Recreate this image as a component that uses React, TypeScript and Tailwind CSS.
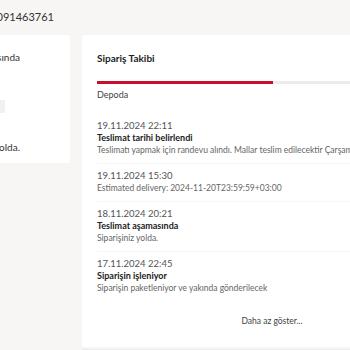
import React from 'react';

type TrackEvent = {
  date: string;
  title?: string;
  text: string;
};

const events: TrackEvent[] = [
  {
    date: '19.11.2024 22:11',
    title: 'Teslimat tarihi belirlendi',
    text: 'Teslimatı yapmak için randevu alındı. Mallar teslim edilecektir Çarşamba, 20.11.2024',
  },
  { date: '19.11.2024 15:30', text: 'Estimated delivery: 2024-11-20T23:59:59+03:00' },
  { date: '18.11.2024 20:21', title: 'Teslimat aşamasında', text: 'Siparişiniz yolda.' },
  {
    date: '17.11.2024 22:45',
    title: 'Siparişin işleniyor',
    text: 'Siparişin paketleniyor ve yakında gönderilecek',
  },
];

const App: React.FC = () => {
  return (
    <div className="w-[350px] h-[350px] overflow-hidden bg-[#f7f6f4] font-['Lato',sans-serif] text-[#2b2b2b]">
      <div className="-ml-[130px] w-[640px] pt-[8px]">
        <div className="h-[17px] text-right w-[184px] text-[11px] leading-[17px] text-[#333]">
          Sipariş No: 1091463761
        </div>

        <div className="mt-[10px] flex items-start gap-[12px]">
          <aside className="w-[200px] h-[128px] bg-white rounded-[3px] pt-[16px] pr-[50px] text-[10px] leading-[12px] text-[#333]">
            <div className="text-right">Teslimat aşamasında</div>
            <div className="mt-[37px] ml-auto mr-[15px] w-[10px] h-[13px] bg-[#f2f1ef]" />
            <div className="mt-[28px] text-right">Siparişiniz yolda.</div>
          </aside>

          <section className="flex-1 bg-white rounded-[3px] pt-[16px] pb-[20px] pl-[15px] text-[8.5px] leading-[12px]">
            <h2 className="text-[10px] leading-[14px] font-bold text-[#222]">Sipariş Takibi</h2>

            <div className="mt-[16px] flex h-[3px]">
              <div className="w-[176px] bg-[#c8102e]" />
              <div className="flex-1 bg-[#ebebeb]" />
            </div>

            <div className="mt-[5px] text-[9px] text-[#444]">Depoda</div>

            <ul className="mt-[13px]">
              {events.map((e, i) => (
                <li
                  key={e.date}
                  className={`pt-[6px] pb-[7px] ${i < events.length - 1 ? 'border-b border-[#f7f7f6]' : ''}`}
                >
                  <div className="text-[9.5px] text-[#555]">{e.date}</div>
                  {e.title && <div className="text-[9px] font-bold text-[#222]">{e.title}</div>}
                  <div className="text-[#666] whitespace-nowrap">{e.text}</div>
                </li>
              ))}
            </ul>

            <div className="mt-[14px] w-[350px] text-center text-[#444]">Daha az göster...</div>
          </section>
        </div>

        <div className="mt-[2px] ml-[212px] h-[8px] bg-[#ebeae8]" />
      </div>
    </div>
  );
};

export default App;
